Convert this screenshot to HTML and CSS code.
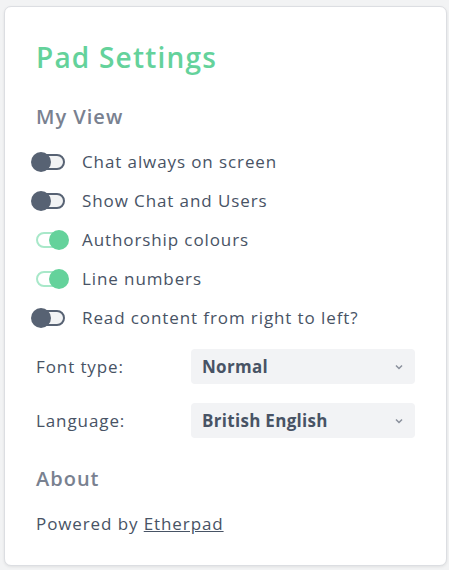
FILE: index.html
```html
<!DOCTYPE html>
<html lang="en">
<head>
<meta charset="utf-8">
<title>Pad Settings</title>
<link rel="stylesheet" href="styles.css">
</head>
<body>
<div class="card">
  <h1 class="title">Pad Settings</h1>
  <h2 class="section">My View</h2>
  <div class="toggles">
    <label class="row"><span class="toggle"></span><span>Chat always on screen</span></label>
    <label class="row"><span class="toggle"></span><span>Show Chat and Users</span></label>
    <label class="row"><span class="toggle on"></span><span>Authorship colours</span></label>
    <label class="row"><span class="toggle on"></span><span>Line numbers</span></label>
    <label class="row"><span class="toggle"></span><span>Read content from right to left?</span></label>
  </div>
  <div class="selects">
    <div class="srow">
      <span class="slabel">Font type:</span>
      <div class="select"><span>Normal</span><svg class="chev" width="8" height="6" viewBox="0 0 8 6"><path d="M1 1.5 L4 4.5 L7 1.5" fill="none" stroke="#8a909c" stroke-width="1.5"/></svg></div>
    </div>
    <div class="srow">
      <span class="slabel">Language:</span>
      <div class="select"><span>British English</span><svg class="chev" width="8" height="6" viewBox="0 0 8 6"><path d="M1 1.5 L4 4.5 L7 1.5" fill="none" stroke="#8a909c" stroke-width="1.5"/></svg></div>
    </div>
  </div>
  <h2 class="section about">About</h2>
  <p class="powered">Powered by <a href="#">Etherpad</a></p>
</div>
</body>
</html>
```
FILE: styles.css
```css
html, body { margin: 0; padding: 0; }
body {
  background: #f2f3f4;
  font-family: "Open Sans", "Noto Sans", sans-serif;
  color: #485365;
  width: 449px;
  height: 570px;
  overflow: hidden;
}
.card {
  box-sizing: border-box;
  margin: 6px 2px 0 4px;
  width: 443px;
  height: 560px;
  background: #fff;
  border: 1px solid #dcdee2;
  border-radius: 7px;
  box-shadow: 0 1px 3px rgba(0,0,0,0.08);
  padding: 30px 31px 0 31px;
}
.title {
  margin: 0;
  font-size: 28px;
  line-height: 40px;
  font-weight: 600;
  letter-spacing: 1.2px;
  color: #64d29b;
}
.section {
  margin: 25px 0 0 0;
  font-size: 20px;
  line-height: 30px;
  font-weight: 600;
  letter-spacing: 1px;
  color: #798190;
}
.toggles { margin-top: 10px; display: flex; flex-direction: column; }
.row {
  display: flex;
  align-items: center;
  height: 39px;
  font-size: 17px;
  letter-spacing: 0.9px;
}
.toggle {
  position: relative;
  width: 46px;
  height: 20px;
  margin-left: -5px;
  flex: none;
}
.toggle::before {
  content: "";
  position: absolute;
  left: 1px;
  top: 2px;
  width: 29px;
  height: 12px;
  border: 2px solid #576273;
  border-radius: 9px;
  background: #f2f3f4;
}
.toggle::after {
  content: "";
  position: absolute;
  left: 0;
  top: 0;
  width: 20px;
  height: 20px;
  border-radius: 50%;
  background: #576273;
}
.toggle.on::before {
  left: 5px;
  width: 27px;
  border-color: #a8e8c9;
  background: #fff;
}
.toggle.on::after {
  left: 18px;
  background: #64d29b;
}
.row span + span { margin-left: 5px; }
.selects { margin-top: 12px; display: flex; flex-direction: column; gap: 19px; }
.srow { display: flex; align-items: center; height: 35px; }
.slabel { width: 155px; font-size: 17px; letter-spacing: 0.9px; flex: none; }
.select {
  box-sizing: border-box;
  width: 225px;
  height: 35px;
  background: #f2f3f5;
  border-radius: 4px;
  display: flex;
  align-items: center;
  justify-content: space-between;
  padding: 0 12px 0 11px;
  font-size: 17px;
  font-weight: 700;
  letter-spacing: 0.3px;
  color: #485365;
}
.chev { display: block; }
.about { margin-top: 26px; }
.powered {
  margin: 18px 0 0 0;
  font-size: 17px;
  line-height: 24px;
  letter-spacing: 0.9px;
}
.powered a { color: #485365; text-decoration: underline; }
```
